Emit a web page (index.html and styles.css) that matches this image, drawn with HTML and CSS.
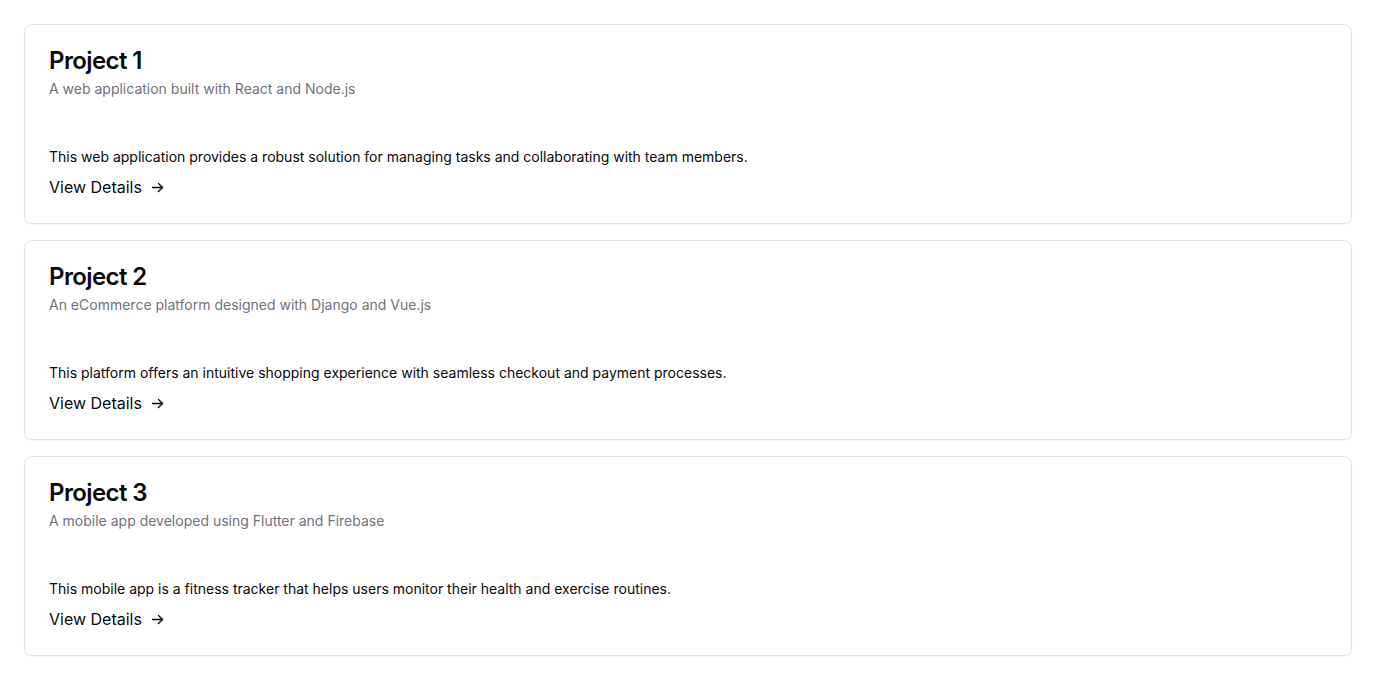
FILE: index.html
```html
<!DOCTYPE html>
<html lang="en">
<head>
<meta charset="utf-8">
<title>Projects</title>
<link rel="stylesheet" href="styles.css">
</head>
<body>
<main class="list">
  <section class="card">
    <header class="card-header">
      <h2 class="card-title">Project 1</h2>
      <p class="card-desc">A web application built with React and Node.js</p>
    </header>
    <div class="card-content">
      <p class="card-text">This web application provides a robust solution for managing tasks and collaborating with team members.</p>
      <a class="link" href="#">View Details <svg class="icon" viewBox="0 0 15 15" fill="none" stroke="currentColor" stroke-width="1.4" stroke-linecap="round" stroke-linejoin="round"><path d="M2.5 7.5H12.5"/><path d="M8.5 3.5 12.5 7.5 8.5 11.5"/></svg></a>
    </div>
  </section>
  <section class="card">
    <header class="card-header">
      <h2 class="card-title">Project 2</h2>
      <p class="card-desc">An eCommerce platform designed with Django and Vue.js</p>
    </header>
    <div class="card-content">
      <p class="card-text">This platform offers an intuitive shopping experience with seamless checkout and payment processes.</p>
      <a class="link" href="#">View Details <svg class="icon" viewBox="0 0 15 15" fill="none" stroke="currentColor" stroke-width="1.4" stroke-linecap="round" stroke-linejoin="round"><path d="M2.5 7.5H12.5"/><path d="M8.5 3.5 12.5 7.5 8.5 11.5"/></svg></a>
    </div>
  </section>
  <section class="card">
    <header class="card-header">
      <h2 class="card-title">Project 3</h2>
      <p class="card-desc">A mobile app developed using Flutter and Firebase</p>
    </header>
    <div class="card-content">
      <p class="card-text">This mobile app is a fitness tracker that helps users monitor their health and exercise routines.</p>
      <a class="link" href="#">View Details <svg class="icon" viewBox="0 0 15 15" fill="none" stroke="currentColor" stroke-width="1.4" stroke-linecap="round" stroke-linejoin="round"><path d="M2.5 7.5H12.5"/><path d="M8.5 3.5 12.5 7.5 8.5 11.5"/></svg></a>
    </div>
  </section>
</main>
</body>
</html>
```
FILE: styles.css
```css
* { box-sizing: border-box; }
html, body { margin: 0; padding: 0; background: #fff; }
body {
  font-family: Inter, "Noto Sans", sans-serif;
  color: #09090b;
}
.list {
  padding: 24px;
  display: flex;
  flex-direction: column;
  gap: 16px;
}
.card {
  border: 1px solid #e4e4e7;
  border-radius: 8px;
  background: #fff;
  box-shadow: 0 1px 2px rgba(0,0,0,0.05);
}
.card-header {
  padding: 24px;
  display: flex;
  flex-direction: column;
  gap: 6px;
}
.card-title {
  margin: 0;
  font-size: 24px;
  line-height: 24px;
  font-weight: 600;
  letter-spacing: -0.6px;
}
.card-desc {
  margin: 0;
  font-size: 14px;
  line-height: 20px;
  color: #71717a;
}
.card-content {
  padding: 24px;
}
.card-text {
  margin: 0;
  font-size: 14px;
  line-height: 20px;
}
.link {
  margin-top: 8px;
  display: inline-flex;
  align-items: center;
  font-size: 16px;
  line-height: 24px;
  color: #09090b;
  text-decoration: none;
}
.icon {
  width: 15px;
  height: 15px;
  margin-left: 8px;
}
```
